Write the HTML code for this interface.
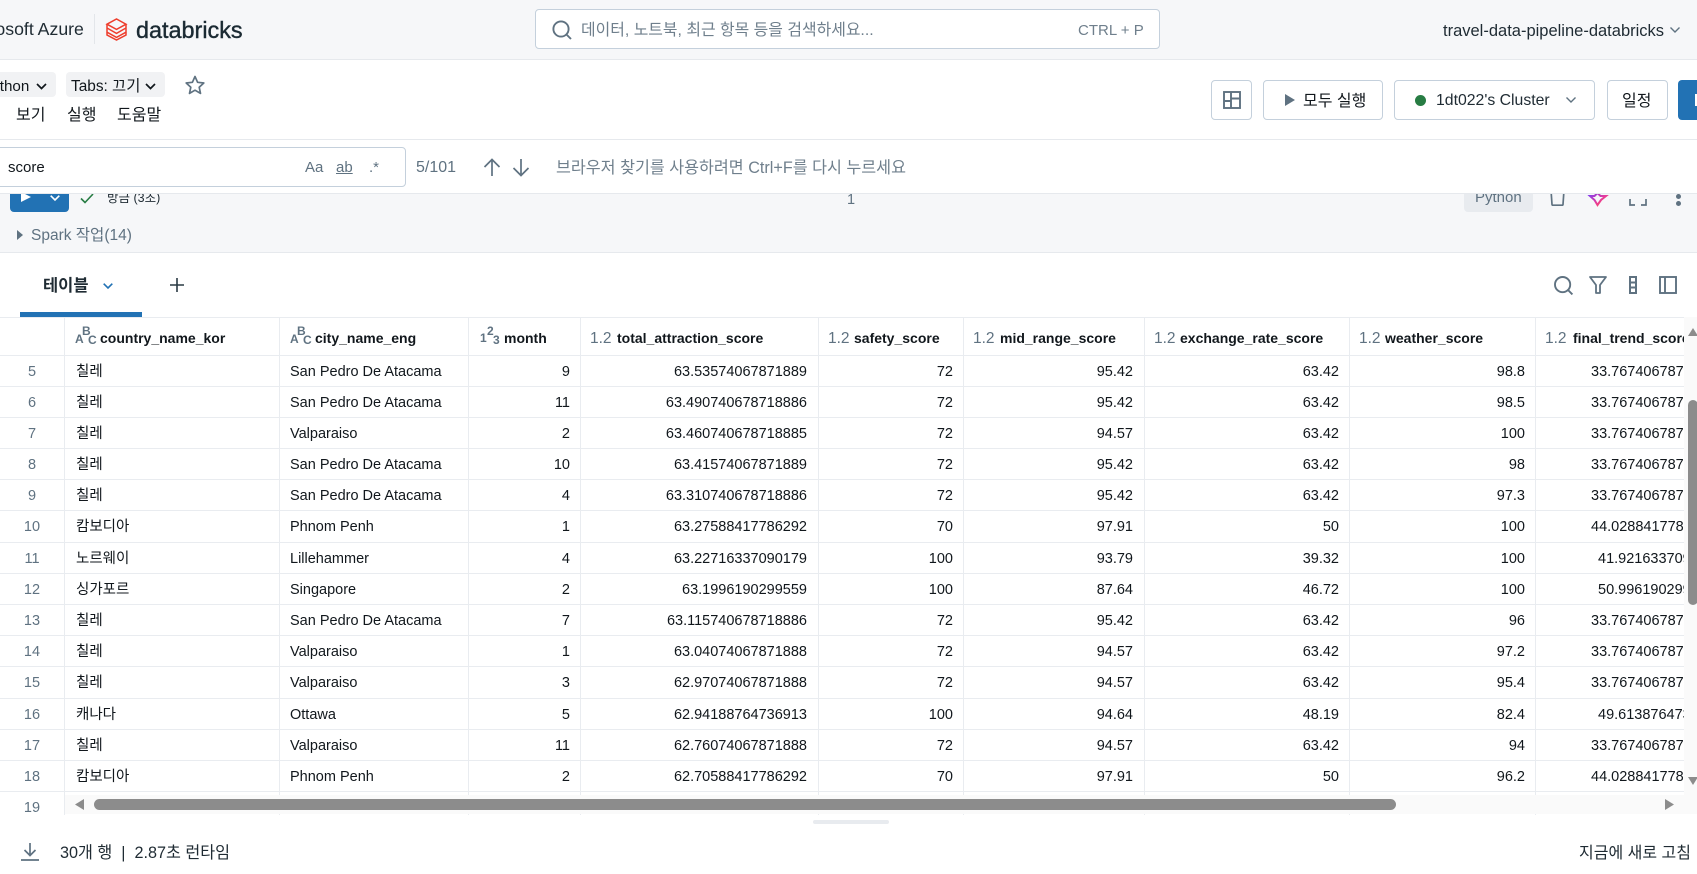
<!DOCTYPE html>
<html lang="ko"><head><meta charset="utf-8"><title>databricks</title>
<style>
*{box-sizing:border-box}
html,body{margin:0;padding:0;width:1697px;height:874px;overflow:hidden;background:#fff}
body{position:relative;font:14.5px/20px "Liberation Sans","Noto Sans CJK KR",sans-serif;color:#11171c}
.a{position:absolute}
.t{position:absolute;white-space:nowrap;line-height:20px}
.btn{position:absolute;top:80px;height:40px;background:#fff;border:1px solid #c4d0dc;border-radius:4px}
.g{color:#5f7281}
svg{position:absolute;overflow:visible}
#tbl{position:absolute;left:0;top:317px;width:1684px;height:498px;overflow:hidden;background:#fff}
.r{display:grid;grid-template-columns:65px 215px 189px 112px 238px 145px 181px 205px 186px 400px;height:31.2px;line-height:33px;white-space:nowrap}
.r>div{border-right:1.5px solid #e9ecf0;border-bottom:1.5px solid #e9ecf0;padding:0 10px;text-align:right;overflow:hidden}
.r>div:nth-child(1){text-align:center;color:#5f7281;padding:0}
.r>div:nth-child(2),.r>div:nth-child(3){text-align:left}
.r>div:nth-child(2){padding-left:11px}
.r>div:nth-child(5),.r>div:nth-child(7){padding-right:11px}
.r>div:nth-child(10){text-align:left;padding-left:55px;border-right:0}
.r>div.s{padding-left:62px}
.h{height:38.5px;line-height:41px;border-top:1.5px solid #e9ecf0;font-weight:bold;font-size:14px}
.h>div{text-align:left!important;padding:0!important;position:relative}
.h>div b{position:absolute;top:0;white-space:nowrap}
.h i{position:absolute;font-style:normal;color:#5f7281;font-size:15.5px;font-weight:normal;top:0}
.h u{position:absolute;text-decoration:none;color:#5f7281;font-size:12px;line-height:12px;font-weight:bold}
</style></head><body>

<!-- top bar -->
<div class="a" style="left:0;top:0;width:1697px;height:60px;background:#f6f7f9;border-bottom:1px solid #e6e9ed"></div>
<span class="t" style="left:-38px;top:19px;font-size:17.7px;color:#1f2b33">Microsoft Azure</span>
<div class="a" style="left:94px;top:14px;width:1px;height:30px;background:#e3e6ea"></div>
<svg style="left:106px;top:18px" width="21" height="23" viewBox="0 0 21 23" fill="none" stroke="#ee3d2c" stroke-width="1.5" stroke-linejoin="miter"><path d="M1 6.2 10.5 1 20 6.2 10.5 11.4Z"/><path d="M1 6.5V10L10.5 15.4 20 10V6.5"/><path d="M1 10.5V14.2L10.5 19.4 20 14.2V10.5"/><path d="M1 14.5V17L10.5 22 20 17V14.5"/></svg>
<span class="t" style="left:136px;top:20px;font-size:23.4px;color:#1b2a33;-webkit-text-stroke:.4px #1b2a33">databricks</span>

<div class="a" style="left:535px;top:9px;width:625px;height:40px;background:#fff;border:1px solid #c4d0dc;border-radius:4px"></div>
<svg style="left:552px;top:20px" width="20" height="20" viewBox="0 0 20 20" fill="none" stroke="#5f7281" stroke-width="1.9"><circle cx="9" cy="9" r="7.6"/><path d="M14.5 14.5 19 19"/></svg>
<span class="t" style="left:581px;top:21px;font-size:15.9px;color:#6f7f8c">데이터, 노트북, 최근 항목 등을 검색하세요...</span>
<span class="t" style="left:1078px;top:21px;font-size:15px;color:#6f7f8c">CTRL + P</span>
<span class="t" style="left:1443px;top:21px;font-size:16.5px;color:#1f2b33">travel-data-pipeline-databricks</span>
<svg style="left:1670px;top:27px" width="10" height="6" viewBox="0 0 10 6" fill="none" stroke="#5f7281" stroke-width="1.4"><path d="M.5.5 5 5 9.5.5"/></svg>

<!-- toolbar -->
<div class="a" style="left:0;top:60px;width:1697px;height:80px;background:#fff;border-bottom:1px solid #e6e9ed"></div>
<div class="a" style="left:-20px;top:72px;width:76px;height:25px;background:#f1f2f4;border-radius:4px"></div>
<span class="t" style="left:-18px;top:77px;font-size:15.2px">Python</span>
<svg style="left:36px;top:83px" width="11" height="7" viewBox="0 0 11 7" fill="none" stroke="#11171c" stroke-width="1.7"><path d="M1 1 5.5 5.5 10 1"/></svg>
<div class="a" style="left:66px;top:72px;width:99px;height:25px;background:#f1f2f4;border-radius:4px"></div>
<span class="t" style="left:71px;top:77px;font-size:15.4px">Tabs: 끄기</span>
<svg style="left:145px;top:83px" width="11" height="7" viewBox="0 0 11 7" fill="none" stroke="#11171c" stroke-width="1.7"><path d="M1 1 5.5 5.5 10 1"/></svg>
<svg style="left:185px;top:75px" width="20" height="20" viewBox="0 0 20 20" fill="none" stroke="#5f7281" stroke-width="1.7" stroke-linejoin="round"><path d="M10 1.5 12.6 7.3 18.8 8 14.2 12.2 15.5 18.4 10 15.2 4.5 18.4 5.8 12.2 1.2 8 7.4 7.3Z"/></svg>
<span class="t" style="left:16px;top:106px;font-size:16px">보기</span>
<span class="t" style="left:67px;top:106px;font-size:16px">실행</span>
<span class="t" style="left:117px;top:106px;font-size:16px">도움말</span>

<div class="btn" style="left:1211px;width:41px"></div>
<svg style="left:1223px;top:91px" width="18" height="18" viewBox="0 0 18 18" fill="none" stroke="#5f7281" stroke-width="1.9"><rect x="1" y="1" width="16" height="16"/><path d="M8 1V17M8 10H1M8 7.5H17"/></svg>
<div class="btn" style="left:1263px;width:120px"></div>
<svg style="left:1285px;top:93px" width="10" height="14" viewBox="0 0 10 14"><path d="M0 1V13L10 7Z" fill="#5f7281"/></svg>
<span class="t" style="left:1303px;top:92px;font-size:16px">모두 실행</span>
<div class="btn" style="left:1394px;width:201px"></div>
<div class="a" style="left:1415px;top:95px;width:11px;height:11px;border-radius:50%;background:#277c43"></div>
<span class="t" style="left:1436px;top:91px;font-size:15.8px;color:#1f2b33">1dt022's Cluster</span>
<svg style="left:1566px;top:97px" width="10" height="6" viewBox="0 0 10 6" fill="none" stroke="#5f7281" stroke-width="1.4"><path d="M.5.5 5 5 9.5.5"/></svg>
<div class="btn" style="left:1607px;width:61px"></div>
<span class="t" style="left:1622px;top:92px;font-size:16px">일정</span>
<div class="a" style="left:1678px;top:80px;width:30px;height:40px;background:#2272b4;border-radius:4px"></div>
<div class="a" style="left:1695px;top:94px;width:2px;height:12px;background:#fff"></div>

<!-- find bar -->
<div class="a" style="left:0;top:140px;width:1697px;height:54px;background:#fff;border-bottom:1px solid #e6e9ed;z-index:3"></div>
<div class="a" style="left:-6px;top:147px;width:412px;height:40px;background:#fff;border:1px solid #c4d0dc;border-radius:4px;z-index:3"></div>
<div style="position:absolute;left:0;top:0;z-index:4;width:1697px;height:194px">
<span class="t" style="left:8px;top:158px;font-size:15px">score</span>
<span class="t g" style="left:305px;top:158px;font-size:15px">Aa</span>
<span class="t g" style="left:336px;top:158px;font-size:15px;text-decoration:underline">ab</span>
<span class="t g" style="left:369px;top:158px;font-size:15px">.*</span>
<span class="t g" style="left:416px;top:158px;font-size:16px">5/101</span>
<svg style="left:483px;top:158px" width="18" height="19" viewBox="0 0 18 19" fill="none" stroke="#5f7281" stroke-width="1.7"><path d="M9 18V1.5M1.5 9 9 1.5 16.5 9"/></svg>
<svg style="left:512px;top:158px" width="18" height="19" viewBox="0 0 18 19" fill="none" stroke="#5f7281" stroke-width="1.7"><path d="M9 1V17.5M1.5 10 9 17.5 16.5 10"/></svg>
<span class="t" style="left:556px;top:158px;font-size:16.2px;color:#6f7f8c">브라우저 찾기를 사용하려면 Ctrl+F를 다시 누르세요</span>
</div>

<!-- cell area -->
<div class="a" style="left:0;top:194px;width:1697px;height:59px;background:#f6f7f9;border-bottom:1px solid #e6e9ed"></div>
<div class="a" style="left:10px;top:180px;width:59px;height:32px;background:#2272b4;border-radius:4px"></div>
<svg style="left:21px;top:192px" width="10" height="10" viewBox="0 0 10 10"><path d="M0 0V10L10 5Z" fill="#fff"/></svg>
<svg style="left:50px;top:195px" width="10" height="6" viewBox="0 0 10 6" fill="none" stroke="#fff" stroke-width="1.6"><path d="M.7.7 5 5 9.3.7"/></svg>
<svg style="left:80px;top:193px" width="14" height="11" viewBox="0 0 14 11" fill="none" stroke="#277c43" stroke-width="1.6"><path d="M1 5.5 5 9.5 13 1"/></svg>
<span class="t" style="left:107px;top:188px;font-size:12.5px;color:#1f2b33">방금 (3초)</span>
<span class="t g" style="left:847px;top:190px;font-size:14.5px">1</span>
<div class="a" style="left:1464px;top:180px;width:69px;height:32px;background:#e8ebef;border-radius:4px"></div>
<span class="t g" style="left:1475px;top:188px;font-size:15px">Python</span>
<svg style="left:1550px;top:190px" width="15" height="16" viewBox="0 0 15 16" fill="none" stroke="#5f7281" stroke-width="1.7"><path d="M1 0 2 14.5Q2 15.2 3 15.2H12Q13 15.2 13 14.5L14 0"/></svg>
<svg style="left:1589px;top:192px" width="18" height="14" viewBox="0 0 18 14" fill="none" stroke-width="2"><defs><linearGradient id="sp" x1="0" y1="0" x2="1" y2="1"><stop offset="0" stop-color="#7b3ff2"/><stop offset=".6" stop-color="#e73b9b"/><stop offset="1" stop-color="#ff4d4d"/></linearGradient></defs><path d="M1 4H5.5L8.5 1 11.5 4H17L12 8 8.5 13 5.5 8Z" stroke="url(#sp)"/></svg>
<svg style="left:1629px;top:190px" width="18" height="16" viewBox="0 0 18 16" fill="none" stroke="#5f7281" stroke-width="1.7"><path d="M1 9V15H6M17 9V15H12M1 0V3M17 0V3"/></svg>
<div class="a" style="left:1676px;top:194px;width:5px;height:5px;border-radius:50%;background:#5f7281"></div>
<div class="a" style="left:1676px;top:201px;width:5px;height:5px;border-radius:50%;background:#5f7281"></div>
<svg style="left:17px;top:230px" width="6" height="10" viewBox="0 0 6 10"><path d="M0 0V10L6 5Z" fill="#5f7281"/></svg>
<span class="t" style="left:31px;top:226px;font-size:15.5px;color:#5f7281">Spark 작업(14)</span>

<!-- result tabs -->
<div class="a" style="left:20px;top:312px;width:122px;height:5px;background:#2272b4"></div>
<span class="t" style="left:43px;top:276px;font-size:16.5px;font-weight:bold;color:#1f2b33">테이블</span>
<svg style="left:103px;top:283px" width="10" height="6" viewBox="0 0 10 6" fill="none" stroke="#2272b4" stroke-width="1.6"><path d="M.7.7 5 5 9.3.7"/></svg>
<svg style="left:170px;top:278px" width="14" height="14" viewBox="0 0 14 14" fill="none" stroke="#2a3a44" stroke-width="1.6"><path d="M7 0V14M0 7H14"/></svg>
<svg style="left:1554px;top:276px" width="19" height="19" viewBox="0 0 19 19" fill="none" stroke="#5f7281" stroke-width="1.9"><circle cx="8.6" cy="8.6" r="7.6"/><path d="M14 14 18.4 18.4"/></svg>
<svg style="left:1589px;top:276px" width="18" height="18" viewBox="0 0 18 18" fill="none" stroke="#5f7281" stroke-width="1.8" stroke-linejoin="round"><path d="M1 1H17L11 9V17H7V9Z"/></svg>
<svg style="left:1629px;top:276px" width="8" height="18" viewBox="0 0 8 18" fill="none" stroke="#5f7281" stroke-width="2"><rect x="1" y="1" width="6" height="16"/><path d="M1 6.5H7M1 11.5H7"/></svg>
<svg style="left:1659px;top:276px" width="18" height="18" viewBox="0 0 18 18" fill="none" stroke="#5f7281" stroke-width="1.9"><rect x="1" y="1" width="16" height="16"/><path d="M6 1V17"/></svg>

<!-- table -->
<div id="tbl">
<div class="r h">
<div></div>
<div><u style="left:10px;top:15px">A</u><u style="left:17px;top:7px">B</u><u style="left:23px;top:16px">C</u><b style="left:35px">country_name_kor</b></div>
<div><u style="left:10px;top:15px">A</u><u style="left:17px;top:7px">B</u><u style="left:23px;top:16px">C</u><b style="left:35px">city_name_eng</b></div>
<div><u style="left:11px;top:14px">1</u><u style="left:18px;top:7px">2</u><u style="left:24px;top:16px">3</u><b style="left:35px">month</b></div>
<div><i style="left:9px">1.2</i><b style="left:36px">total_attraction_score</b></div>
<div><i style="left:9px">1.2</i><b style="left:35px">safety_score</b></div>
<div><i style="left:9px">1.2</i><b style="left:36px">mid_range_score</b></div>
<div><i style="left:9px">1.2</i><b style="left:35px">exchange_rate_score</b></div>
<div><i style="left:9px">1.2</i><b style="left:35px">weather_score</b></div>
<div><i style="left:9px">1.2</i><b style="left:37px">final_trend_score</b></div>
</div>
<div class="r"><div>5</div><div>칠레</div><div>San Pedro De Atacama</div><div>9</div><div>63.53574067871889</div><div>72</div><div>95.42</div><div>63.42</div><div>98.8</div><div>33.76740678718886</div></div>
<div class="r"><div>6</div><div>칠레</div><div>San Pedro De Atacama</div><div>11</div><div>63.490740678718886</div><div>72</div><div>95.42</div><div>63.42</div><div>98.5</div><div>33.76740678718886</div></div>
<div class="r"><div>7</div><div>칠레</div><div>Valparaiso</div><div>2</div><div>63.460740678718885</div><div>72</div><div>94.57</div><div>63.42</div><div>100</div><div>33.76740678718886</div></div>
<div class="r"><div>8</div><div>칠레</div><div>San Pedro De Atacama</div><div>10</div><div>63.41574067871889</div><div>72</div><div>95.42</div><div>63.42</div><div>98</div><div>33.76740678718886</div></div>
<div class="r"><div>9</div><div>칠레</div><div>San Pedro De Atacama</div><div>4</div><div>63.310740678718886</div><div>72</div><div>95.42</div><div>63.42</div><div>97.3</div><div>33.76740678718886</div></div>
<div class="r"><div>10</div><div>캄보디아</div><div>Phnom Penh</div><div>1</div><div>63.27588417786292</div><div>70</div><div>97.91</div><div>50</div><div>100</div><div>44.02884177862</div></div>
<div class="r"><div>11</div><div>노르웨이</div><div>Lillehammer</div><div>4</div><div>63.22716337090179</div><div>100</div><div>93.79</div><div>39.32</div><div>100</div><div class="s">41.92163370901</div></div>
<div class="r"><div>12</div><div>싱가포르</div><div>Singapore</div><div>2</div><div>63.1996190299559</div><div>100</div><div>87.64</div><div>46.72</div><div>100</div><div class="s">50.99619029955</div></div>
<div class="r"><div>13</div><div>칠레</div><div>San Pedro De Atacama</div><div>7</div><div>63.115740678718886</div><div>72</div><div>95.42</div><div>63.42</div><div>96</div><div>33.76740678718886</div></div>
<div class="r"><div>14</div><div>칠레</div><div>Valparaiso</div><div>1</div><div>63.04074067871888</div><div>72</div><div>94.57</div><div>63.42</div><div>97.2</div><div>33.76740678718886</div></div>
<div class="r"><div>15</div><div>칠레</div><div>Valparaiso</div><div>3</div><div>62.97074067871888</div><div>72</div><div>94.57</div><div>63.42</div><div>95.4</div><div>33.76740678718886</div></div>
<div class="r"><div>16</div><div>캐나다</div><div>Ottawa</div><div>5</div><div>62.94188764736913</div><div>100</div><div>94.64</div><div>48.19</div><div>82.4</div><div class="s">49.61387647369</div></div>
<div class="r"><div>17</div><div>칠레</div><div>Valparaiso</div><div>11</div><div>62.76074067871888</div><div>72</div><div>94.57</div><div>63.42</div><div>94</div><div>33.76740678718886</div></div>
<div class="r"><div>18</div><div>캄보디아</div><div>Phnom Penh</div><div>2</div><div>62.70588417786292</div><div>70</div><div>97.91</div><div>50</div><div>96.2</div><div>44.02884177862</div></div>
<div class="r"><div>19</div><div></div><div></div><div></div><div></div><div></div><div></div><div></div><div></div><div></div></div>
</div>

<!-- scrollbars -->
<div class="a" style="left:65px;top:795px;width:1632px;height:19px;background:#fafafa"></div>
<div class="a" style="left:94px;top:799px;width:1302px;height:11px;background:#8c8c8c;border-radius:6px"></div>
<svg style="left:75px;top:799px" width="9" height="11" viewBox="0 0 9 11"><path d="M9 0V11L0 5.5Z" fill="#8c8c8c"/></svg>
<svg style="left:1665px;top:799px" width="9" height="11" viewBox="0 0 9 11"><path d="M0 0V11L9 5.5Z" fill="#8c8c8c"/></svg>
<div class="a" style="left:1684px;top:317px;width:13px;height:497px;background:#fafafa"></div>
<div class="a" style="left:1688px;top:400px;width:10px;height:205px;background:#8c8c8c;border-radius:5px"></div>
<svg style="left:1688px;top:328px" width="9" height="9" viewBox="0 0 9 9"><path d="M0 8 5 0 10 8Z" fill="#8c8c8c"/></svg>
<svg style="left:1688px;top:777px" width="9" height="9" viewBox="0 0 9 9"><path d="M0 0 5 8 10 0Z" fill="#8c8c8c"/></svg>

<!-- footer -->
<div class="a" style="left:813px;top:820px;width:76px;height:4px;background:#e8ebef;border-radius:2px"></div>
<svg style="left:21px;top:843px" width="18" height="18" viewBox="0 0 18 18" fill="none" stroke="#5f7281" stroke-width="1.7"><path d="M9 0V12M3.5 7 9 12.5 14.5 7M0 17H18"/></svg>
<span class="t" style="left:60px;top:843px;font-size:16.2px;color:#1f2b33">30개 행 &nbsp;|&nbsp; 2.87초 런타임</span>
<span class="t" style="left:1579px;top:844px;font-size:16px;color:#1f2b33">지금에 새로 고침</span>
</body></html>
